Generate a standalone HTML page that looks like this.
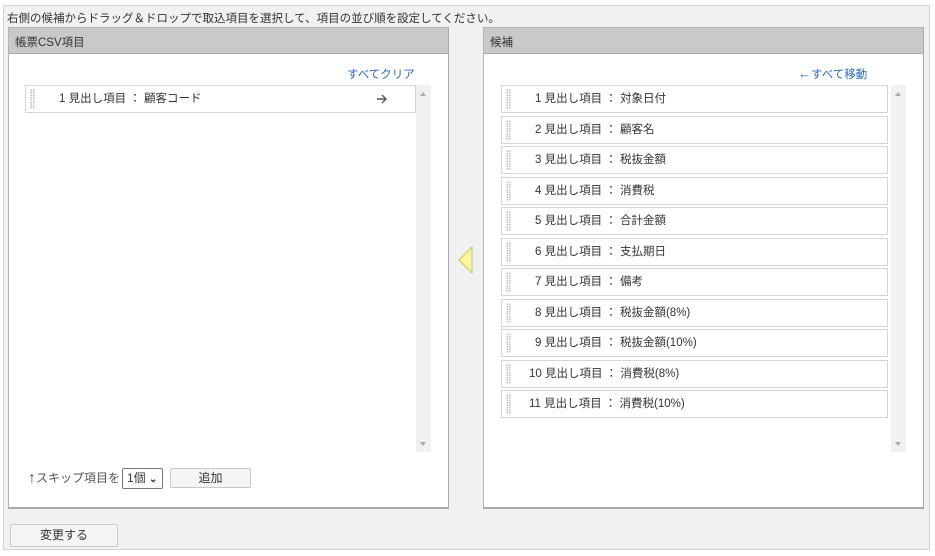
<!DOCTYPE html>
<html><head><meta charset="utf-8"><style>
*{box-sizing:border-box;margin:0;padding:0}
body{width:935px;height:556px;background:#fff;font-family:"Liberation Sans","Noto Sans CJK JP",sans-serif;font-size:12px;color:#333;position:relative;overflow:hidden}
.outer{position:absolute;left:3px;top:5px;width:927px;height:545px;background:#f0f1f0;border:1px solid #d4d4d4}
.p{position:absolute;top:27px;height:482px;background:#fff;border:1px solid #b5b5b5;border-right-color:#aaa;border-bottom:2px solid #aaa}
.hd{height:26px;background:#c8cac8;border-bottom:1px solid #a9aba9;padding:6px 6px;font-size:11.5px;color:#333}
.lnk{position:absolute;color:#2a6cb8;font-size:12px}
.it{position:absolute;height:28px;border:1px solid #d6d6d6;background:#fff;font-size:11.5px;line-height:26px;padding-left:33px}
.it:before{content:"";position:absolute;left:4px;top:3px;width:5px;height:20px;background-image:radial-gradient(#bbb 0.7px,transparent 0.8px);background-size:2.5px 2.5px}
.sb{position:absolute;width:15px;background:#f1f1f1}
.sb:before,.sb:after{content:"";position:absolute;left:4px;border-left:3.5px solid transparent;border-right:3.5px solid transparent}
.sb:before{top:7px;border-bottom:4px solid #aaa}
.sb:after{bottom:6px;border-top:4px solid #aaa}
.btn{position:absolute;background:#f5f5f5;border:1px solid #c8c8c8;border-radius:2px;text-align:center;font-size:12px}
</style></head><body>
<div class="outer"></div>
<div style="position:absolute;left:7px;top:10px;font-size:11.5px;color:#333">右側の候補からドラッグ＆ドロップで取込項目を選択して、項目の並び順を設定してください。</div>

<div class="p" style="left:8px;width:441px"><div class="hd">帳票CSV項目</div></div>
<div class="lnk" style="left:347px;top:66px;font-size:11.5px">すべてクリア</div>
<div class="it" style="left:25px;top:85px;width:391px">1 見出し項目 ： 顧客コード<svg style="position:absolute;left:350px;top:8px" width="12" height="10"><path d="M1 5H10M6 1L10 5L6 9" fill="none" stroke="#555" stroke-width="1.4"/></svg></div>
<div class="sb" style="left:416px;top:85px;height:367px"></div>
<div style="position:absolute;left:28px;top:469px;font-size:12px;color:#555"><span style="font-size:16px;position:relative;top:1px">↑</span>スキップ項目を</div>
<div style="position:absolute;left:122px;top:468px;width:41px;height:21px;border:1px solid #777;border-radius:2px;background:#fff;font-size:12px;line-height:19px;padding-left:4px">1個 <span style="font-size:10px;font-weight:bold">⌄</span></div>
<div class="btn" style="left:170px;top:468px;width:81px;height:20px;line-height:18px">追加</div>

<svg style="position:absolute;left:457px;top:245px" width="18" height="30"><polygon points="15,2 15,28 2,15" fill="#fff79a" stroke="#c9c27a" stroke-width="1"/></svg>

<div class="p" style="left:483px;width:441px"><div class="hd">候補</div></div>
<div class="lnk" style="left:798px;top:66px;font-size:11.5px"><span style="font-size:13px">←</span>すべて移動</div>
<div class="sb" style="left:891px;top:85px;height:367px"></div>
<div class="it" style="left:501px;top:85px;width:387px">1 見出し項目 ： 対象日付</div>
<div class="it" style="left:501px;top:116px;width:387px">2 見出し項目 ： 顧客名</div>
<div class="it" style="left:501px;top:146px;width:387px">3 見出し項目 ： 税抜金額</div>
<div class="it" style="left:501px;top:177px;width:387px">4 見出し項目 ： 消費税</div>
<div class="it" style="left:501px;top:207px;width:387px">5 見出し項目 ： 合計金額</div>
<div class="it" style="left:501px;top:238px;width:387px">6 見出し項目 ： 支払期日</div>
<div class="it" style="left:501px;top:268px;width:387px">7 見出し項目 ： 備考</div>
<div class="it" style="left:501px;top:299px;width:387px">8 見出し項目 ： 税抜金額(8%)</div>
<div class="it" style="left:501px;top:329px;width:387px">9 見出し項目 ： 税抜金額(10%)</div>
<div class="it" style="left:501px;top:360px;width:387px;padding-left:27px">10 見出し項目 ： 消費税(8%)</div>
<div class="it" style="left:501px;top:390px;width:387px;padding-left:27px">11 見出し項目 ： 消費税(10%)</div>

<div class="btn" style="left:10px;top:524px;width:108px;height:23px;line-height:21px">変更する</div>
</body></html>
